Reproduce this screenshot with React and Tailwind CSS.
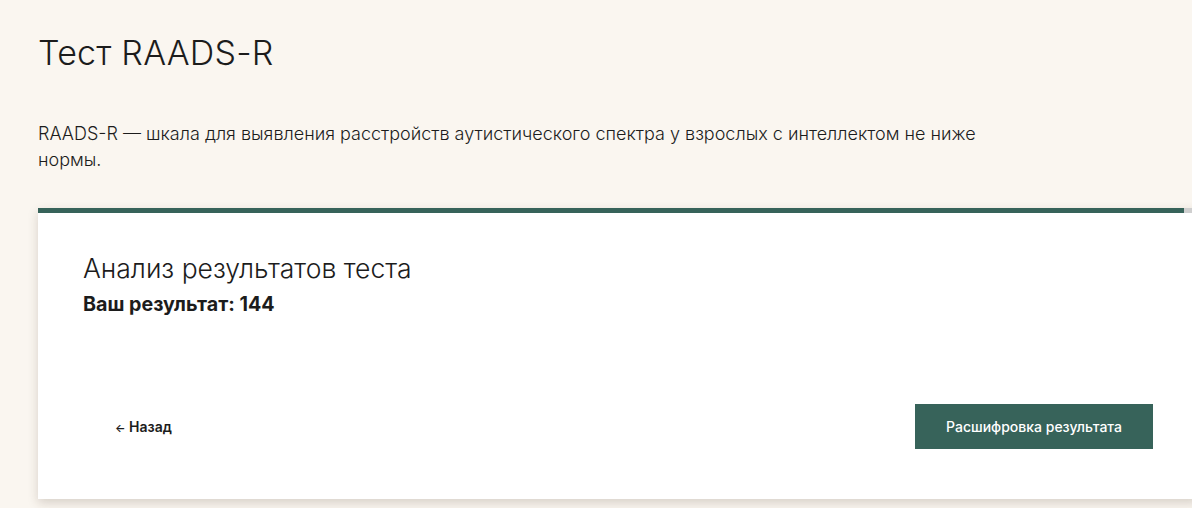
import React from "react";

export default function App() {
  return (
    <div
      className="min-h-[508px] w-full overflow-hidden bg-[#faf6f0] text-[#1c1c1c]"
      style={{ fontFamily: "Inter, 'Noto Sans', sans-serif" }}
    >
      <div className="pl-[38px] pt-[30px]">
        <h1 className="text-[34px] font-light leading-[46px] tracking-[0.2px]">Тест RAADS-R</h1>

        <p className="mt-[45px] max-w-[960px] text-[18px] font-light leading-[26px]">
          RAADS-R — шкала для выявления расстройств аутистического спектра у взрослых с интеллектом не ниже нормы.
        </p>

        {/* Result card */}
        <div className="mt-[35px] w-[1160px] bg-white shadow-[0_4px_10px_rgba(60,40,20,0.18)]">
          <div className="flex h-[5px] w-full">
            <div className="h-full w-[1146px] bg-[#37635a]" />
            <div className="h-full flex-1 bg-[#cfcfcf]" />
          </div>

          <div className="px-[45px] pt-[38px] pb-[50px]">
            <h2 className="text-[26.5px] font-light leading-[34px]">Анализ результатов теста</h2>
            <div className="mt-[6px] text-[19.7px] font-bold leading-[26px]">Ваш результат: 144</div>

            <div className="mt-[87px] flex items-center justify-between">
              <button type="button" className="h-[45px] px-[32px] text-[14px] font-semibold">
                <span className="text-[11px]">←</span> Назад
              </button>
              <button
                type="button"
                className="h-[45px] w-[238px] bg-[#37635a] text-[14px] font-medium text-white"
              >
                Расшифровка результата
              </button>
            </div>
          </div>
        </div>
      </div>
    </div>
  );
}
